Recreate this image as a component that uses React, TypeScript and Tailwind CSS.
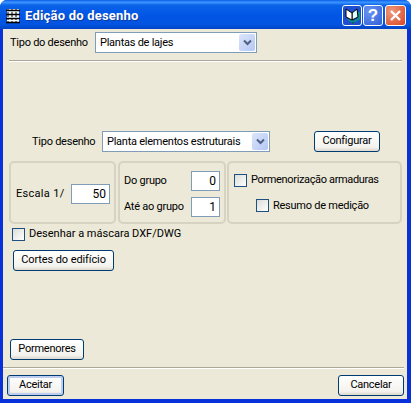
import React from "react";

const font = "font-['Roboto',sans-serif] text-[11px] tracking-[-0.25px] text-black whitespace-nowrap";

function Arrow() {
  return (
    <span className="flex h-[17px] w-[16px] items-center justify-center rounded-[2px] bg-[linear-gradient(135deg,#dbe5fb,#b4c7f4)]">
      <svg width="9" height="7" viewBox="0 0 9 7">
        <path d="M1 1.5 L4.5 5 L8 1.5" fill="none" stroke="#4d6185" strokeWidth="2" />
      </svg>
    </span>
  );
}

function Select({ text, className }: { text: string; className: string }) {
  return (
    <div className={`flex items-center justify-between border border-[#7f9db9] bg-white pl-[4px] pr-[1px] ${className}`}>
      <span className="mt-[1px]">{text}</span>
      <Arrow />
    </div>
  );
}

function Btn({ text, className, primary }: { text: string; className: string; primary?: boolean }) {
  return (
    <div
      className={`flex h-[21px] items-center justify-center rounded-[3px] border border-[#003c74] bg-[linear-gradient(180deg,#ffffff,#f4f3ee_80%,#dcd8cc)] ${
        primary ? "shadow-[inset_0_0_0_2px_#bccdf0]" : ""
      } ${className}`}
    >
      {text}
    </div>
  );
}

function Check({ className = "" }: { className?: string }) {
  return (
    <span className={`block h-[13px] w-[13px] shrink-0 border border-[#1c5180] bg-[linear-gradient(135deg,#dcdcd7,#ffffff)] ${className}`} />
  );
}

function NumInput({ value, className }: { value: string; className: string }) {
  return (
    <div className={`flex items-center justify-end border border-[#7f9db9] bg-white pr-[3px] text-[12px] tracking-normal ${className}`}>
      {value}
    </div>
  );
}

function Separator({ className }: { className: string }) {
  return <div className={`h-[2px] border-t border-[#aca899] bg-white ${className}`} />;
}

export default function App() {
  return (
    <div className={`flex h-[403px] w-[411px] flex-col overflow-hidden rounded-t-[7px] bg-[#0831d9] ${font}`}>
      <div className="flex h-[29px] shrink-0 items-center bg-[linear-gradient(180deg,#0a5fe8_0%,#3d95ff_8%,#0a62e8_18%,#0255e5_55%,#0254e0_85%,#0343c4_100%)] pl-[5px] pr-[5px]">
        <svg width="16" height="16" viewBox="0 0 16 16" className="mt-[2px] shrink-0">
          <rect x="2" y="1" width="12" height="14" fill="#fff" />
          <path d="M1 2.5h14M1 6.5h14M1 10.5h14M1 14.5h14" stroke="#000" strokeWidth="1.6" fill="none" />
          <path d="M3 1v15M7 1v15M11 1v15" stroke="#000" strokeWidth="1" strokeDasharray="2 1" fill="none" />
        </svg>
        <span className="ml-[4px] mt-[2px] font-['Roboto',sans-serif] text-[13px] font-bold tracking-[0.2px] text-white [text-shadow:1px_1px_0_#0f3a9e]">
          Edição do desenho
        </span>
        <div className="ml-auto mt-[1px] flex">
          <span className="mr-[1px] flex h-[21px] w-[20px] items-center justify-center rounded-[3px] border border-white bg-[#1f4fd0]">
            <svg width="17" height="17" viewBox="0 0 17 17">
              <path d="M4 12 L9 15 L15 12 L15 5" fill="none" stroke="#0a8f8a" strokeWidth="2" />
              <path d="M8 6 L13 2 L14 10 L8 13 Z" fill="#dff" stroke="#000" />
              <path d="M2 2 L8 6 L8 13 L2 10 Z" fill="#fff" stroke="#000" />
              <path d="M8 15h2v2H8z" fill="#06655f" />
            </svg>
          </span>
          <span className="mr-[2px] flex h-[21px] w-[20px] items-center justify-center rounded-[3px] border border-white bg-[radial-gradient(circle_at_30%_30%,#6d95f0,#2d5fd8)] font-['Liberation_Sans',sans-serif] text-[17px] font-bold leading-none tracking-normal text-white">
            ?
          </span>
          <span className="flex h-[21px] w-[21px] items-center justify-center rounded-[3px] border border-white bg-[radial-gradient(circle_at_30%_30%,#ee9a80,#d8451f)]">
            <svg width="13" height="13" viewBox="0 0 13 13">
              <path d="M2 2 L11 11 M11 2 L2 11" stroke="#fff" strokeWidth="2.4" fill="none" />
            </svg>
          </span>
        </div>
      </div>

      <div className="ml-[3px] mr-[4px] mb-[4px] flex min-h-0 flex-1 flex-col bg-[#ece9d8]">
        <div className="mt-[3px] flex items-center pl-[7px]">
          <span className="mt-[1px] w-[85px]">Tipo do desenho</span>
          <Select text="Plantas de lajes" className="h-[21px] w-[162px]" />
        </div>
        <Separator className="ml-[6px] mr-[5px] mt-[7px]" />

        <div className="mt-[69px] flex items-center">
          <span className="ml-[29px] mt-[1px] w-[70px]">Tipo desenho</span>
          <Select text="Planta elementos estruturais" className="h-[21px] w-[168px]" />
          <Btn text="Configurar" className="ml-[44px] w-[66px]" />
        </div>

        <div className="mt-[9px] ml-[6px] flex h-[63px]">
          <div className="mr-[2px] flex w-[107px] items-center rounded-[5px] border-2 border-[#d6d3c2] pl-[5px] pt-[3px]">
            <span className="w-[55px] tracking-[0.3px]">Escala 1/</span>
            <NumInput value="50" className="h-[20px] w-[39px]" />
          </div>
          <div className="mr-[1px] flex w-[108px] flex-col justify-center gap-[6px] rounded-[5px] border-2 border-[#d6d3c2] pl-[4px] pt-[3px]">
            <div className="flex items-center">
              <span className="w-[67px]">Do grupo</span>
              <NumInput value="0" className="h-[20px] w-[29px]" />
            </div>
            <div className="flex items-center">
              <span className="w-[67px]">Até ao grupo</span>
              <NumInput value="1" className="h-[20px] w-[29px]" />
            </div>
          </div>
          <div className="flex w-[175px] flex-col justify-center rounded-[5px] border-2 border-[#d6d3c2] pl-[5px] pt-[1px]">
            <div className="flex items-center gap-[4px]">
              <Check />
              <span className="tracking-[-0.35px]">Pormenorização armaduras</span>
            </div>
            <div className="ml-[22px] mt-[9px] flex items-center gap-[4px]">
              <Check />
              <span>Resumo de medição</span>
            </div>
          </div>
        </div>

        <div className="ml-[9px] mt-[2px] flex items-center gap-[4px]">
          <Check />
          <span className="tracking-normal">Desenhar a máscara DXF/DWG</span>
        </div>
        <Btn text="Cortes do edifício" className="ml-[10px] mt-[7px] w-[101px] tracking-[-0.1px]" />

        <div className="flex-1" />
        <Btn text="Pormenores" className="ml-[7px] w-[74px]" />
        <Separator className="mr-[3px] mt-[7px]" />
        <div className="mb-[3px] mt-[6px] flex justify-between pl-[4px] pr-[3px]">
          <Btn text="Aceitar" primary className="w-[57px]" />
          <Btn text="Cancelar" className="w-[66px]" />
        </div>
      </div>
    </div>
  );
}
